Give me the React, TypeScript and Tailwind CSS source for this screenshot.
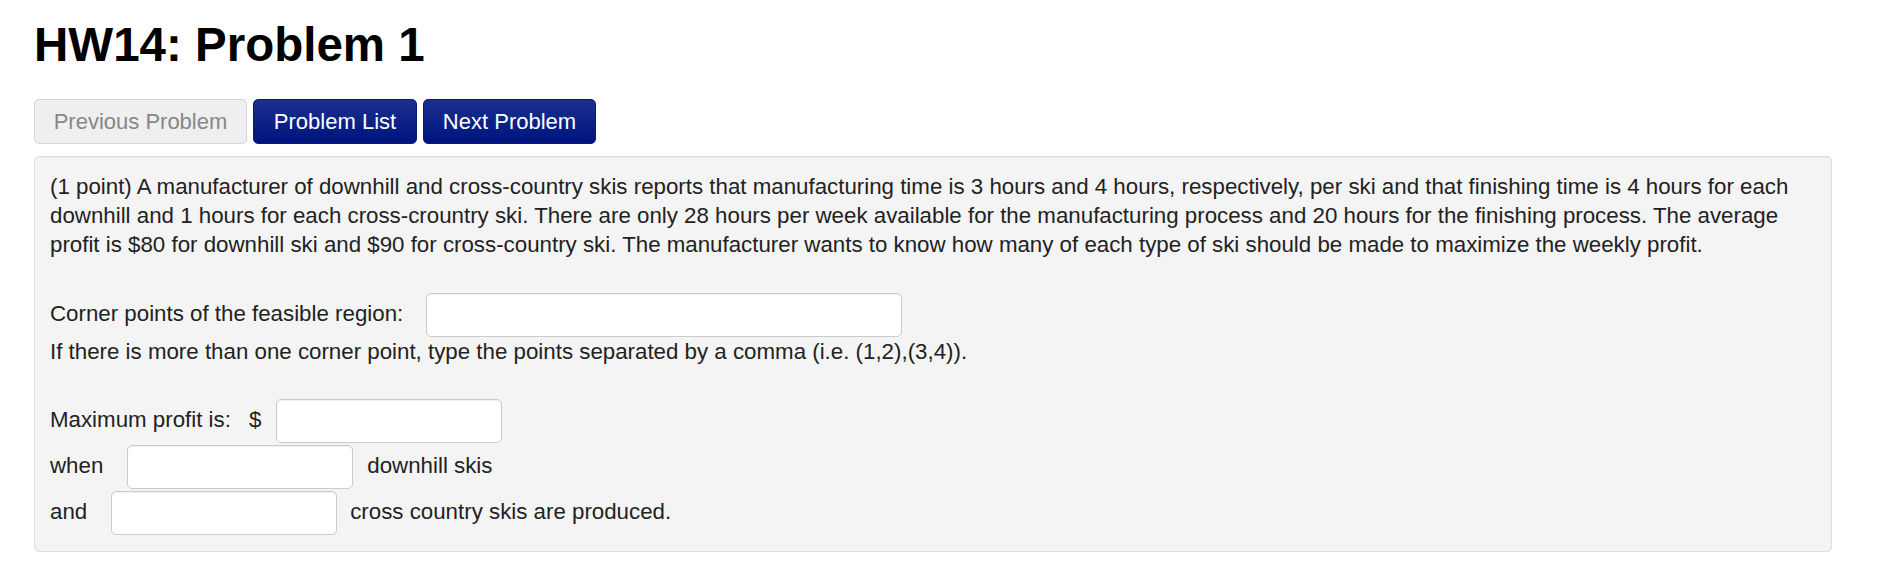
import React from 'react';

const font = "font-['Liberation_Sans',Arial,Helvetica,sans-serif]";

function AnswerBox({ className = '' }: { className?: string }) {
  return (
    <input
      type="text"
      aria-label="answer"
      className={`h-[44px] rounded-[5px] border-[1.5px] border-[#cbcbcb] bg-white px-2 text-[22px] shadow-[inset_0_1px_1px_rgba(0,0,0,0.06)] outline-none ${className}`}
    />
  );
}

export default function App() {
  return (
    <div className={`${font} min-h-[584px] bg-white pl-[34px] text-[#222]`}>
      {/* Title */}
      <h1 className="pt-[21px] text-[47.5px] font-bold leading-[48px] text-black">HW14: Problem 1</h1>

      {/* Navigation */}
      <div className="mt-[30px] flex gap-[6px]">
        <button className="h-[45px] w-[213px] rounded-[5px] border-[1.5px] border-[#d4d4d4] bg-[#efefef] text-[22px] text-[#878787]">
          Previous Problem
        </button>
        <button className="h-[45px] w-[164px] rounded-[5px] border-[1.5px] border-[#0b1a78] bg-gradient-to-b from-[#1b2f8e] to-[#00127f] text-[22px] text-white">
          Problem List
        </button>
        <button className="h-[45px] w-[173px] rounded-[5px] border-[1.5px] border-[#0b1a78] bg-gradient-to-b from-[#1b2f8e] to-[#00127f] text-[22px] text-white">
          Next Problem
        </button>
      </div>

      {/* Problem body */}
      <div className="mt-[12px] w-[1798px] rounded-[5px] border border-[#dedede] bg-[#f4f4f4] px-[15px] pb-[16px] pt-[15px] text-[22.3px] leading-[29px] shadow-[inset_0_1px_1px_rgba(0,0,0,0.04)]">
        <p>
          (1 point) A manufacturer of downhill and cross-country skis reports that manufacturing time is 3 hours and 4
          hours, respectively, per ski and that finishing time is 4 hours for each downhill and 1 hours for each
          cross-crountry ski. There are only 28 hours per week available for the manufacturing process and 20 hours for
          the finishing process. The average profit is $80 for downhill ski and $90 for cross-country ski. The
          manufacturer wants to know how many of each type of ski should be made to maximize the weekly profit.
        </p>

        <div className="mt-[34px] flex h-[44px] items-center">
          <span className="-mt-[4px]">Corner points of the feasible region:</span>
          <AnswerBox className="ml-[23px] w-[476px]" />
        </div>
        <p>If there is more than one corner point, type the points separated by a comma (i.e. (1,2),(3,4)).</p>

        <div className="mt-[33px] flex h-[44px] items-center">
          <span className="-mt-[3px]">Maximum profit is:</span>
          <span className="-mt-[3px] ml-[18px]">$</span>
          <AnswerBox className="ml-[15px] w-[226px]" />
        </div>
        <div className="mt-[2px] flex h-[44px] items-center">
          <span className="-mt-[4px]">when</span>
          <AnswerBox className="ml-[24px] w-[226px]" />
          <span className="-mt-[4px] ml-[14px]">downhill skis</span>
        </div>
        <div className="mt-[2px] flex h-[44px] items-center">
          <span className="-mt-[4px]">and</span>
          <AnswerBox className="ml-[24px] w-[226px]" />
          <span className="-mt-[4px] ml-[13px]">cross country skis are produced.</span>
        </div>
      </div>
    </div>
  );
}
